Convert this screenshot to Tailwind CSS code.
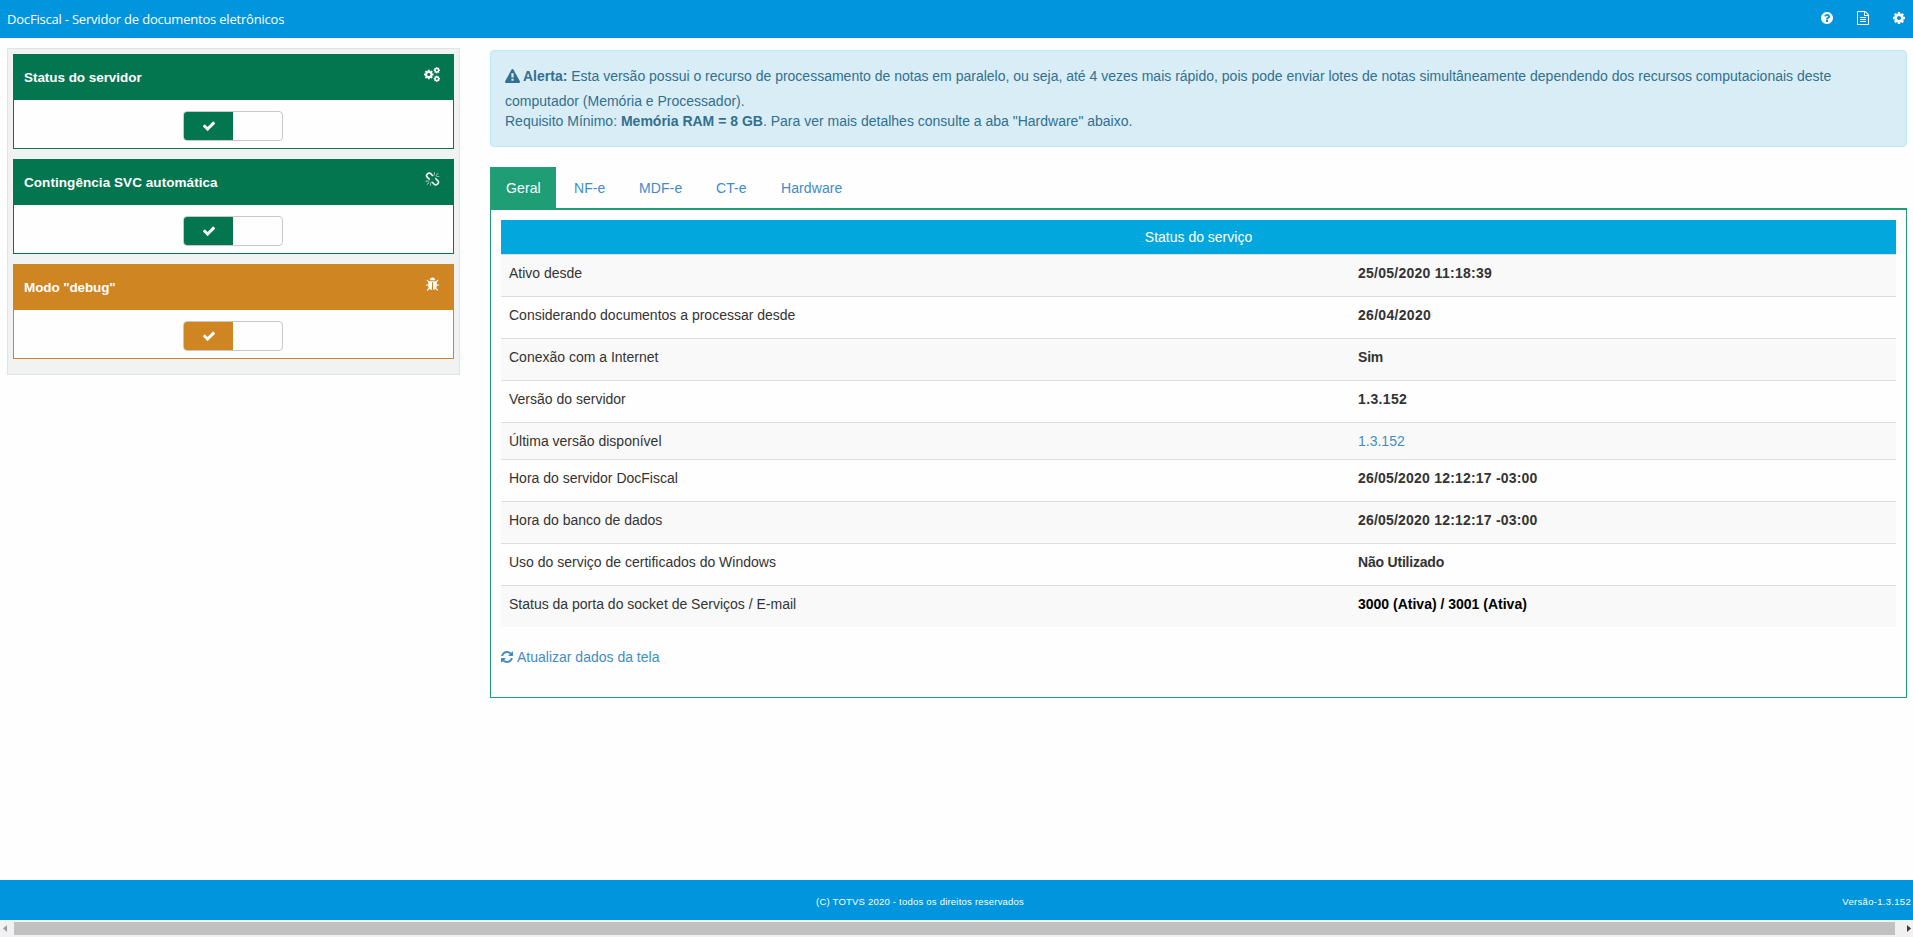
<!DOCTYPE html>
<html lang="pt-BR">
<head>
  <meta charset="UTF-8">
  <meta name="viewport" content="width=device-width, initial-scale=1.0">
  <title>DocFiscal - Servidor de documentos eletrônicos</title>
  <script src="https://cdn.jsdelivr.net/npm/@tailwindcss/browser@4"></script>
</head>
<body class="h-screen flex flex-col overflow-hidden bg-[#fefefe] font-['Liberation_Sans',Arial,sans-serif] text-sm leading-5 text-[#333]">
  <!-- Icons -->
  <svg class="hidden">
    <symbol id="check" viewBox="0 0 1792 1792"><path d="M1671 566q0 40-28 68l-724 724-136 136q-28 28-68 28t-68-28l-136-136-362-362q-28-28-28-68t28-68l136-136q28-28 68-28t68 28l294 295 656-657q28-28 68-28t68 28l136 136q28 28 28 68z"/></symbol>
    <symbol id="cog" viewBox="0 0 1792 1792"><path d="M1152 896q0-106-75-181t-181-75-181 75-75 181 75 181 181 75 181-75 75-181zm512-109v222q0 12-8 23t-20 13l-185 28q-19 54-39 91 35 50 107 138 10 12 10 25t-9 23q-27 37-99 108t-94 71q-12 0-26-9l-138-108q-44 23-91 38-16 136-29 186-7 28-36 28h-222q-14 0-24.500-8.500t-11.500-21.500l-28-184q-49-16-90-37l-141 107q-10 9-25 9-14 0-25-11-126-114-165-168-7-10-7-23 0-12 8-23 15-21 51-66.500t54-70.500q-27-50-41-99l-183-27q-13-2-21-12.500t-8-23.500v-222q0-12 8-23t19-13l186-28q14-46 39-92-40-57-107-138-10-12-10-24 0-10 9-23 26-36 98.500-107.500t94.500-71.500q13 0 26 10l138 107q44-23 91-38 16-136 29-186 7-28 36-28h222q14 0 24.500 8.500t11.500 21.500l28 184q49 16 90 37l142-107q9-9 24-9 13 0 25 10 129 119 165 170 7 8 7 22 0 12-8 23-15 21-51 66.500t-54 70.500q26 50 41 98l183 28q13 2 21 12.500t8 23.500z"/></symbol>
    <symbol id="cogs" viewBox="0 0 1920 1792">
      <use href="#cog" x="-96" y="224" width="1344" height="1344"/>
      <use href="#cog" x="1088" y="-64" width="896" height="896"/>
      <use href="#cog" x="1088" y="960" width="896" height="896"/>
    </symbol>
    <symbol id="question" viewBox="0 0 1792 1792"><path d="M1024 1376v-192q0-14-9-23t-23-9h-192q-14 0-23 9t-9 23v192q0 14 9 23t23 9h192q14 0 23-9t9-23zm256-672q0-88-55.500-163t-138.500-116-170-41q-243 0-371 213-15 24 8 42l132 100q7 6 19 6 16 0 25-12 53-68 86-92 34-24 86-24 48 0 85.500 26t37.500 59q0 38-20 61t-68 45q-63 28-115.500 86.500t-52.500 125.500v36q0 14 9 23t23 9h192q14 0 23-9t9-23q0-19 21.500-49.500t54.500-49.500q32-18 49-28.500t46-35 44.500-48 28-60.500 12.500-81zm384 192q0 209-103 385.500t-279.500 279.500-385.500 103-385.500-103-279.500-279.500-103-385.500 103-385.500 279.500-279.500 385.500-103 385.500 103 279.500 279.500 103 385.500z"/></symbol>
    <symbol id="file" viewBox="0 0 1792 1792"><path d="M1596 380q28 28 48 76t20 88v1152q0 40-28 68t-68 28h-1344q-40 0-68-28t-28-68v-1600q0-40 28-68t68-28h896q40 0 88 20t76 48zm-444-244v376h376q-10-29-22-41l-313-313q-12-12-41-22zm384 1528v-1024h-416q-40 0-68-28t-28-68v-416h-768v1536h1280zm-1024-864q0-14 9-23t23-9h704q14 0 23 9t9 23v64q0 14-9 23t-23 9h-704q-14 0-23-9t-9-23v-64zm736 224q14 0 23 9t9 23v64q0 14-9 23t-23 9h-704q-14 0-23-9t-9-23v-64q0-14 9-23t23-9h704zm0 256q14 0 23 9t9 23v64q0 14-9 23t-23 9h-704q-14 0-23-9t-9-23v-64q0-14 9-23t23-9h704z"/></symbol>
    <symbol id="warning" viewBox="0 0 1792 1792"><path d="M1024 1375v-190q0-14-9.500-23.500t-22.500-9.500h-192q-13 0-22.500 9.500t-9.500 23.500v190q0 14 9.500 23.500t22.500 9.500h192q13 0 22.500-9.500t9.500-23.500zm-2-374l18-459q0-12-10-19-13-11-24-11h-220q-11 0-24 11-10 7-10 21l17 457q0 10 10 16.500t24 6.500h185q14 0 23.500-6.500t10.500-16.500zm-14-934l768 1408q35 63-2 126-17 29-46.500 46t-63.500 17h-1536q-34 0-63.500-17t-46.500-46q-37-63-2-126l768-1408q17-31 47-49t65-18 65 18 47 49z"/></symbol>
    <symbol id="refresh" viewBox="0 0 1792 1792"><path d="M1639 1056q0 5-1 7-64 268-268 434.500t-478 166.500q-146 0-282.500-55t-243.500-157l-129 129q-19 19-45 19t-45-19-19-45v-448q0-26 19-45t45-19h448q26 0 45 19t19 45-19 45l-137 137q71 66 161 102t187 36q134 0 250-65t186-179q11-17 53-117 8-23 30-23h192q13 0 22.500 9.500t9.500 22.500zm25-800v448q0 26-19 45t-45 19h-448q-26 0-45-19t-19-45 19-45l138-138q-148-137-349-137-134 0-250 65t-186 179q-11 17-53 117-8 23-30 23h-199q-13 0-22.500-9.500t-9.500-22.500v-7q65-268 270-434.500t480-166.500q146 0 284 55.500t245 156.500l130-129q19-19 45-19t45 19 19 45z"/></symbol>
    <symbol id="bug" viewBox="0 0 1792 1792"><path d="M1696 960q0 26-19 45t-45 19h-224q0 171-67 290l208 209q19 19 19 45t-19 45q-18 19-45 19t-45-19l-198-197q-5 5-15 13t-42 28.500-65 36.500-82 29-97 13v-896h-128v896q-51 0-101.500-13.500t-87-33-66-39-43.500-32.500l-15-14-183 207q-20 21-48 21-24 0-43-16-19-18-20.500-44.500t15.500-46.500l202-227q-58-114-58-274h-224q-26 0-45-19t-19-45 19-45 45-19h224v-294l-173-173q-19-19-19-45t19-45 45-19 45 19l173 173h844l173-173q19-19 45-19t45 19 19 45-19 45l-173 173v294h224q26 0 45 19t19 45zm-480-576h-640q0-133 93.500-226.500t226.500-93.500 226.500 93.500 93.500 226.500z"/></symbol>
    <symbol id="unlink" viewBox="0 0 1792 1792"><path d="M503 1271l-256 256q-10 9-23 9-12 0-23-9-9-10-9-23t9-23l256-256q10-9 23-9t23 9q9 10 9 23t-9 23zm169 41v320q0 14-9 23t-23 9-23-9-9-23v-320q0-14 9-23t23-9 23 9 9 23zm-224-224q0 14-9 23t-23 9h-320q-14 0-23-9t-9-23 9-23 23-9h320q14 0 23 9t9 23zm1264 128q0 120-85 203l-147 146q-83 83-203 83-121 0-204-85l-334-335q-21-21-42-56l239-18 273 274q27 27 68 27.500t68-26.500l147-146q28-28 28-67 0-40-28-68l-274-275 18-239q35 21 56 42l336 336q84 86 84 204zm-617-724l-239 18-273-274q-28-28-68-28-39 0-68 27l-147 146q-28 28-28 67 0 40 28 68l274 274-18 240q-35-21-56-42l-336-336q-84-86-84-204 0-120 85-203l147-146q83-83 203-83 121 0 204 85l334 335q21 21 42 56zm633 84q0 14-9 23t-23 9h-320q-14 0-23-9t-9-23 9-23 23-9h320q14 0 23 9t9 23zm-544-544v320q0 14-9 23t-23 9-23-9-9-23v-320q0-14 9-23t23-9 23 9 9 23zm407 151l-256 256q-11 9-23 9t-23-9q-9-10-9-23t9-23l256-256q10-9 23-9t23 9q9 10 9 23t-9 23z"/></symbol>
  </svg>

  <!-- Header -->
  <header class="h-[38px] shrink-0 flex items-center justify-between bg-[#0095dc] pl-[7px] pr-[7px] text-white">
    <h1 class="font-['Open_Sans',sans-serif] text-[13px] tracking-[-0.2px]">DocFiscal - Servidor de documentos eletrônicos</h1>
    <div class="flex items-center gap-[22px] pb-0.5">
      <svg class="size-[14px] fill-current"><use href="#question"/></svg>
      <svg class="size-[14px] fill-current"><use href="#file"/></svg>
      <svg class="size-[14px] fill-current"><use href="#cog"/></svg>
    </div>
  </header>

  <main class="grow flex items-start pl-[7px] pr-[6px]">
    <!-- Switches -->
    <aside class="mt-[10px] w-[453px] h-[327px] shrink-0 flex flex-col gap-[10px] border border-[#e3e3e3] bg-[#f1f2f2] p-[5px]">
      <section class="h-[95px] border border-[#03754f] bg-[#fefefe]">
        <div class="h-[45px] flex justify-between bg-[#03754f] pl-[10px] pr-[13px] text-white">
          <h2 class="pt-[13px] font-bold text-[13.5px] tracking-[-0.05px]">Status do servidor</h2>
          <svg class="mt-3 h-[15px] w-[16px] fill-current"><use href="#cogs"/></svg>
        </div>
        <div class="mt-[11px] ml-[169px] w-[100px] h-[30px] flex rounded border border-[#c8c8c8] overflow-hidden">
          <span class="w-[49px] flex items-center justify-center bg-[#03754f] text-white"><svg class="size-[14px] fill-current"><use href="#check"/></svg></span>
        </div>
      </section>
      <section class="h-[95px] border border-[#03754f] bg-[#fefefe]">
        <div class="h-[45px] flex justify-between bg-[#03754f] pl-[10px] pr-[13px] text-white">
          <h2 class="pt-[13px] font-bold text-[13.5px] tracking-[0.06px]">Contingência SVC automática</h2>
          <svg class="mt-3 size-[15px] fill-current"><use href="#unlink"/></svg>
        </div>
        <div class="mt-[11px] ml-[169px] w-[100px] h-[30px] flex rounded border border-[#c8c8c8] overflow-hidden">
          <span class="w-[49px] flex items-center justify-center bg-[#03754f] text-white"><svg class="size-[14px] fill-current"><use href="#check"/></svg></span>
        </div>
      </section>
      <section class="h-[95px] border border-[#cf8522] bg-[#fefefe]">
        <div class="h-[45px] flex justify-between bg-[#cf8522] pl-[10px] pr-[13px] text-white">
          <h2 class="pt-[13px] font-bold text-[13.5px] tracking-[-0.12px]">Modo "debug"</h2>
          <svg class="mt-3 size-[15px] fill-current"><use href="#bug"/></svg>
        </div>
        <div class="mt-[11px] ml-[169px] w-[100px] h-[30px] flex rounded border border-[#c8c8c8] overflow-hidden">
          <span class="w-[49px] flex items-center justify-center bg-[#cf8522] text-white"><svg class="size-[14px] fill-current"><use href="#check"/></svg></span>
        </div>
      </section>
    </aside>

    <div class="ml-[30px] mt-3 grow">
      <!-- Alert -->
      <div class="h-[97px] rounded border border-[#bce8f1] bg-[#d9edf7] px-[14px] pt-[14px] text-[#31708f]">
        <p class="h-[26px] flex items-center whitespace-pre pb-1"><svg class="size-[15px] fill-current mr-[3px]"><use href="#warning"/></svg><b>Alerta:</b> Esta versão possui o recurso de processamento de notas em paralelo, ou seja, até 4 vezes mais rápido, pois pode enviar lotes de notas simultâneamente dependendo dos recursos computacionais deste</p>
        <p>computador (Memória e Processador).</p>
        <p>Requisito Mínimo: <b>Memória RAM = 8 GB</b>. Para ver mais detalhes consulte a aba "Hardware" abaixo.</p>
      </div>

      <!-- Tabs -->
      <nav class="mt-5 h-[41px] flex items-center text-[#428bca] tracking-[0.1px]">
        <a class="h-full w-[66px] flex items-center pl-4 bg-[#1f9e76] text-white">Geral</a>
        <a class="ml-[18px] w-[65px]">NF-e</a>
        <a class="w-[77px]">MDF-e</a>
        <a class="w-[65px]">CT-e</a>
        <a>Hardware</a>
      </nav>

      <div class="h-[490px] border border-t-2 border-[#1f9e76] px-[10px] pt-[10px]">
        <table class="w-full table-fixed">
          <colgroup><col class="w-[849px]"><col></colgroup>
          <thead>
            <tr class="h-[34px] bg-[#02a7de] text-white"><th colspan="2" class="font-normal">Status do serviço</th></tr>
          </thead>
          <tbody>
            <tr class="h-[42px] align-top border-t border-[#ddd] bg-[#f9f9f9]"><td class="p-2">Ativo desde</td><td class="p-2 font-bold tracking-[0.25px]">25/05/2020 11:18:39</td></tr>
            <tr class="h-[42px] align-top border-t border-[#ddd]"><td class="p-2">Considerando documentos a processar desde</td><td class="p-2 font-bold tracking-[0.3px]">26/04/2020</td></tr>
            <tr class="h-[42px] align-top border-t border-[#ddd] bg-[#f9f9f9]"><td class="p-2">Conexão com a Internet</td><td class="p-2 font-bold tracking-[-0.2px]">Sim</td></tr>
            <tr class="h-[42px] align-top border-t border-[#ddd]"><td class="p-2">Versão do servidor</td><td class="p-2 font-bold tracking-[0.35px]">1.3.152</td></tr>
            <tr class="h-[37px] align-top border-t border-[#ddd] bg-[#f9f9f9]"><td class="p-2">Última versão disponível</td><td class="p-2 text-[#428bca]">1.3.152</td></tr>
            <tr class="h-[42px] align-top border-t border-[#ddd]"><td class="p-2">Hora do servidor DocFiscal</td><td class="p-2 font-bold tracking-[0.2px]">26/05/2020 12:12:17 -03:00</td></tr>
            <tr class="h-[42px] align-top border-t border-[#ddd] bg-[#f9f9f9]"><td class="p-2">Hora do banco de dados</td><td class="p-2 font-bold tracking-[0.2px]">26/05/2020 12:12:17 -03:00</td></tr>
            <tr class="h-[42px] align-top border-t border-[#ddd]"><td class="p-2">Uso do serviço de certificados do Windows</td><td class="p-2 font-bold tracking-[-0.2px]">Não Utilizado</td></tr>
            <tr class="h-[42px] align-top border-t border-[#ddd] bg-[#f9f9f9]"><td class="p-2">Status da porta do socket de Serviços / E-mail</td><td class="p-2 font-bold text-black">3000 (Ativa) / 3001 (Ativa)</td></tr>
          </tbody>
        </table>
        <a class="mt-5 flex items-center gap-[3px] text-[#428bca]"><svg class="size-[14px] fill-current -ml-px"><use href="#refresh"/></svg>Atualizar dados da tela</a>
      </div>
    </div>
  </main>

  <!-- Footer -->
  <footer class="h-10 shrink-0 grid grid-cols-[816px_1fr_auto] items-center bg-[#0095dc] pt-[3px] pr-[2px] text-[9.5px] leading-4 text-white">
    <span></span>
    <span class="tracking-[0.22px]">(C) TOTVS 2020 - todos os direitos reservados</span>
    <span class="tracking-[0.3px]">Versão-1.3.152</span>
  </footer>

  <!-- Horizontal scrollbar -->
  <div class="h-[17px] shrink-0 flex items-center bg-[#f1f1f1] pl-[3px] pr-[2px]">
    <svg class="w-[4px] h-[7px] fill-[#a398a8]" viewBox="0 0 4 7"><path d="M4 0v7L0 3.5z"/></svg>
    <div class="ml-[7px] w-[1881px] h-[13px] bg-[#c1c1c1]"></div>
    <svg class="ml-auto w-[4px] h-[7px] fill-[#4b2f4a]" viewBox="0 0 4 7"><path d="M0 0v7l4-3.5z"/></svg>
  </div>
</body>
</html>
